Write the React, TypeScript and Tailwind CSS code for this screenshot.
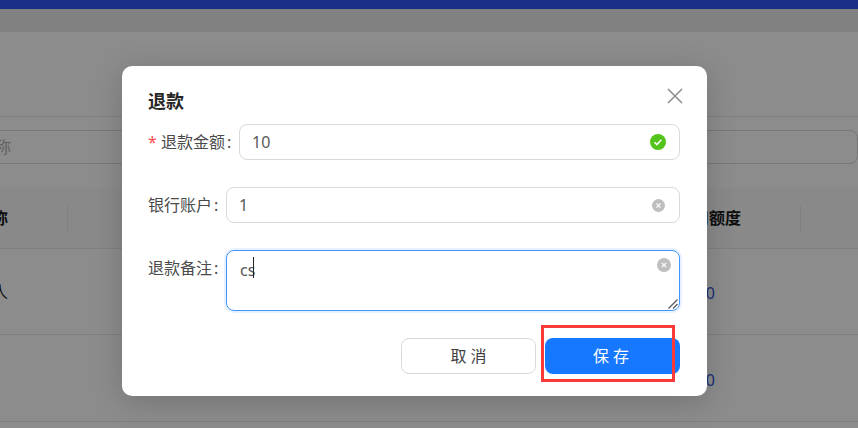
import React from 'react';

const FONT = 'font-["Noto_Sans","Noto_Sans_CJK_SC",sans-serif]';

const ClearIcon = ({ size }: { size: number }) => (
    <svg width={size} height={size} viewBox="0 0 14 14">
        <circle cx="7" cy="7" r="7" fill="#bfbfbf" />
        <path d="M4.8 4.8l4.4 4.4M9.2 4.8l-4.4 4.4" stroke="#fff" strokeWidth="1.2" />
    </svg>
);

const Field = ({ label, required, children }: { label: string; required?: boolean; children: React.ReactNode }) => (
    <div className="flex items-start">
        <label className="flex h-9 shrink-0 items-center text-[16px] text-[#4a4a4a]">
            {required && <span className="w-[13px] text-[16px] text-[#ff4d4f]">*</span>}
            {label}
            <span className="w-[14px] pl-[2px]">:</span>
        </label>
        {children}
    </div>
);

const BackgroundPage = () => (
    <div className="flex h-[428px] flex-col overflow-hidden bg-white">
        <div className="h-[9px] bg-[#2f55f2]" />
        <div className="h-[23px] bg-[#ececec]" />
        <div className="h-[85px] border-b border-[#e8e8e8]" />
        <div className="pt-[13px]">
            <div className="-ml-[22px] flex h-[34px] items-center rounded-lg border border-[#d9d9d9] text-[16px] text-[#b0b0b0]">
                名称
            </div>
        </div>
        <div className="mt-[24px] flex h-[61px] items-center border-b border-[#e8e8e8] bg-[#fafafa] text-[16px] font-semibold text-[#1a1a1a]">
            <div className="flex h-[25px] w-[68px] items-center border-r border-[#e8e8e8]">
                <span className="-ml-[24px]">名称</span>
            </div>
            <div className="ml-auto mr-[57px] flex h-[25px] w-[136px] items-center border-r border-[#e8e8e8] pl-[12px]">
                可用额度
            </div>
        </div>
        <div className="flex h-[86px] items-center border-b border-[#e8e8e8] text-[16px] text-[#1a1a1a]">
            <span className="-ml-[24px]">个人</span>
            <span className="ml-auto mr-[143px] pt-[2px] text-[#3455d8]">1000</span>
        </div>
        <div className="flex h-[87px] items-center justify-end border-b border-[#e8e8e8] text-[16px] text-[#3455d8]">
            <span className="mr-[143px] pt-[4px]">1000</span>
        </div>
    </div>
);

export default function App() {
    return (
        <div className={`relative h-[428px] w-[858px] overflow-hidden ${FONT}`}>
            <BackgroundPage />

            {/* mask + modal */}
            <div className="absolute inset-0 bg-black/45">
                <div className="absolute left-[122px] top-[66px] h-[330px] w-[585px] rounded-[10px] bg-white pl-[26px] pr-[27px] pt-[23px] shadow-[0_6px_30px_rgba(0,0,0,0.18)]">
                    <div className="flex items-center justify-between">
                        <h2 className="text-[18px] font-bold leading-6 text-[#262626]">退款</h2>
                        <svg width="16" height="16" viewBox="0 0 16 16" className="-mr-[3px] -mt-[10px]">
                            <path d="M1 1l14 14M15 1L1 15" stroke="#8c8c8c" strokeWidth="1.5" />
                        </svg>
                    </div>

                    <div className="mt-[11px] flex flex-col gap-[27px]">
                        <Field label="退款金额" required>
                            <div className="flex h-9 flex-1 items-center justify-between rounded-lg border border-[#d9d9d9] pl-[12px] pr-[13px] text-[16px] text-[#595959]">
                                <span>10</span>
                                <svg width="16" height="16" viewBox="0 0 16 16">
                                    <circle cx="8" cy="8" r="8" fill="#52c41a" />
                                    <path d="M4.5 8.2l2.4 2.4 4.4-4.8" fill="none" stroke="#fff" strokeWidth="1.5" />
                                </svg>
                            </div>
                        </Field>
                        <Field label="银行账户">
                            <div className="flex h-9 flex-1 items-center justify-between rounded-lg border border-[#d9d9d9] pl-[12px] pr-[14px] text-[16px] text-[#595959]">
                                <span>1</span>
                                <ClearIcon size={13} />
                            </div>
                        </Field>
                        <Field label="退款备注">
                            <div className="relative flex h-[61px] flex-1 items-start justify-between rounded-lg border border-[#4096ff] pl-[13px] pr-[8px] pt-[7px] text-[16px] text-[#595959] shadow-[0_0_0_2px_rgba(22,119,255,0.1)]">
                                <span className="leading-6">cs</span>
                                <ClearIcon size={14} />
                                <span className="absolute left-[26px] top-[6px] h-[21px] w-px bg-[#222]" />
                                <svg width="10" height="10" viewBox="0 0 10 10" className="absolute bottom-[1px] right-[1px]">
                                    <path d="M0.5 9.5L9.5 0.5M5 9.5L9.5 5" stroke="#555" strokeWidth="1.2" />
                                </svg>
                            </div>
                        </Field>
                    </div>

                    <div className="mt-[27px] flex justify-end gap-[9px]">
                        <button className="h-9 w-[135px] rounded-lg border border-[#d9d9d9] bg-white text-[16px] text-[#404040]">取 消</button>
                        <button className="h-9 w-[135px] rounded-lg bg-[#1677ff] pr-[3px] text-[16px] text-white">保 存</button>
                    </div>
                </div>

                {/* red annotation around the save button */}
                <div className="absolute left-[541px] top-[325px] h-[57px] w-[134px] border-[3px] border-[#f93a3a]" />
            </div>
        </div>
    );
}
